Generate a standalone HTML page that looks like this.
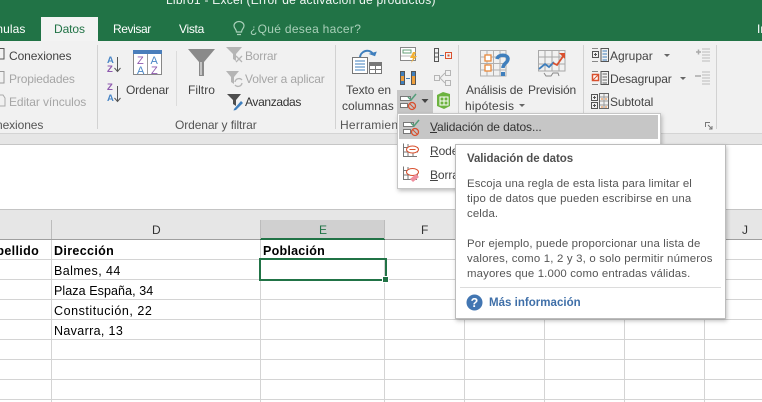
<!DOCTYPE html>
<html><head><meta charset="utf-8"><style>
html,body{margin:0;padding:0}
body{width:762px;height:402px;overflow:hidden;position:relative;background:#fff;font-family:"Liberation Sans",sans-serif;font-size:12px;color:#444}
.a,.t{position:absolute}
.t{white-space:nowrap;line-height:16px}
svg{position:absolute;overflow:visible}
.g{color:#a6a6a6}
.w{color:#fff}
.c{color:#000;font-size:12.5px;letter-spacing:.3px}
.h{color:#333;font-size:12px}
.tip{color:#555;font-size:11.4px;letter-spacing:.14px;left:467px}
</style></head><body>
<div class="a" style="left:0;top:0;width:762px;height:41px;background:#217346"></div>
<div class="t w" style="left:166px;top:-8px;font-size:12px;letter-spacing:.25px;opacity:.95">Libro1 - Excel (Error de activación de productos)</div>
<div class="a" style="left:41px;top:17px;width:57px;height:24px;background:#f3f3f3"></div>
<div class="t w" style="left:-7px;top:21px;letter-spacing:.1px">mulas</div>
<div class="t" style="left:54px;top:21px;color:#217346;letter-spacing:-.1px">Datos</div>
<div class="t w" style="left:113px;top:21px;letter-spacing:-.4px">Revisar</div>
<div class="t w" style="left:179px;top:21px;letter-spacing:-.3px">Vista</div>
<svg style="left:233px;top:21px" width="12" height="16" fill="none" stroke="#a9d0b9" stroke-width="1.2"><path d="M3.5 11C3.5 8 1 7.5 1 4.800a5 4.300 0 0 1 10 0C11 7.500 8.500 8 8.500 11zM4 13.500h4"/></svg>
<div class="t" style="left:250px;top:21px;color:#a9d0b9;letter-spacing:.3px">¿Qué desea hacer?</div>
<div class="t w" style="left:757px;top:21px">In</div>

<div class="a" style="left:0;top:41px;width:762px;height:93px;background:#f1f1f1;border-bottom:1px solid #d4d4d4;box-sizing:border-box"></div>
<div class="a" style="left:0;top:134px;width:762px;height:10px;background:#e6e6e6"></div>
<div class="a" style="left:0;top:144px;width:762px;height:1px;background:#c6c6c6"></div>
<div class="a" style="left:0;top:209px;width:762px;height:1px;background:#c4c4c4"></div>
<div class="a" style="left:0;top:210px;width:762px;height:30px;background:#e6e6e6"></div>
<div class="a" style="left:0;top:239px;width:762px;height:1px;background:#9f9f9f"></div>

<!-- group separators -->
<div class="a" style="left:97px;top:45px;width:1px;height:84px;background:#d2d2d2"></div>
<div class="a" style="left:176px;top:51px;width:1px;height:55px;background:#dcdcdc"></div>
<div class="a" style="left:335px;top:45px;width:1px;height:84px;background:#d2d2d2"></div>
<div class="a" style="left:458px;top:45px;width:1px;height:84px;background:#d2d2d2"></div>
<div class="a" style="left:583px;top:45px;width:1px;height:84px;background:#d2d2d2"></div>
<div class="a" style="left:716px;top:45px;width:1px;height:84px;background:#d2d2d2"></div>

<!-- Conexiones -->
<svg style="left:0;top:48px" width="5" height="60" fill="none" stroke="#666"><path d="M-3 .5H4V11H-3M-3 23.500H4V35H-3" stroke="#999"/><path d="M-3 .5H4V11H-3" stroke="#555"/><path d="M-3 47H3L5 50V58H-3" stroke="#aaa"/></svg>
<div class="t" style="left:9px;top:48px;color:#444;letter-spacing:-.1px">Conexiones</div>
<div class="t g" style="left:9px;top:71px;letter-spacing:-.15px">Propiedades</div>
<div class="t g" style="left:9px;top:94px;letter-spacing:-.1px">Editar vínculos</div>
<div class="t" style="left:-4px;top:117px;color:#555;letter-spacing:-.1px">nexiones</div>

<!-- Ordenar -->
<svg style="left:106px;top:54px" width="16" height="50" font-family="Liberation Sans" font-size="9.500" font-weight="bold"><text x="1" y="9" fill="#4a86c5">A</text><text x="1" y="18" fill="#8e59ae">Z</text><path d="M11.500 3V17M8.500 14l3 3.500 3-3.500" stroke="#555" fill="none"/><text x="1" y="36" fill="#8e59ae">Z</text><text x="1" y="47" fill="#4a86c5">A</text><path d="M11.500 32V47M8.500 44l3 3.500 3-3.500" stroke="#555" fill="none"/></svg>
<svg style="left:133px;top:50px" width="30" height="25" font-family="Liberation Sans" font-size="11"><rect x=".5" y=".5" width="28" height="24" fill="#fff" stroke="#888"/><rect width="29" height="4" fill="#4a7ebb"/><path d="M14.500 4V24" stroke="#999"/><text x="4" y="14" fill="#8e59ae">Z</text><text x="4" y="24" fill="#4a86c5">A</text><text x="17.500" y="14" fill="#4a86c5">A</text><text x="18" y="24" fill="#8e59ae">Z</text></svg>
<div class="t" style="left:126px;top:82px;letter-spacing:-.15px">Ordenar</div>
<!-- Filtro -->
<svg style="left:187px;top:48px" width="30" height="30"><path d="M1 1H28L17 14V28H12V14Z" fill="#8a8a8a"/><path d="M14 14V27" stroke="#d8d8d8" stroke-width="1.500"/></svg>
<div class="t" style="left:188px;top:82px;letter-spacing:.05px">Filtro</div>
<svg style="left:226px;top:46px" width="20" height="20"><path d="M0 1H16L10 8V15L7 13V8Z" fill="#b5b5b5"/><path d="M10 10l6 6M16 10l-6 6" stroke="#b5b5b5" stroke-width="1.300"/></svg>
<div class="t g" style="left:245px;top:48px;letter-spacing:-.2px">Borrar</div>
<svg style="left:226px;top:70px" width="20" height="20" fill="none"><path d="M0 1H13L8 7V14L5 12V7Z" fill="#b5b5b5"/><path d="M9 12a4 4 0 0 1 7-2M16 13a4 4 0 0 1-7 2" stroke="#b5b5b5" stroke-width="1.300"/></svg>
<div class="t g" style="left:245px;top:71px;letter-spacing:-.15px">Volver a aplicar</div>
<svg style="left:226px;top:93px" width="20" height="18"><path d="M1 1H15L10 7V13L7 11V7Z" fill="#4d4d4d"/><path d="M8 16L15 8l2 2-7 7-2.500.5z" fill="#3f7fbd"/></svg>
<div class="t" style="left:245px;top:94px;color:#333;letter-spacing:-.35px">Avanzadas</div>
<div class="t" style="left:175px;top:117px;color:#555;letter-spacing:-.1px">Ordenar y filtrar</div>

<!-- Herramientas -->
<svg style="left:352px;top:48px" width="32" height="28" fill="none"><path d="M8 10C8 3 17 0 21 6" stroke="#3f7fbd" stroke-width="2"/><path d="M17 7h7v-5z" fill="#3f7fbd" transform="rotate(20 20 5)"/><path d="M.5 9.500H15.500V25.500H.5z" fill="#fff" stroke="#777"/><path d="M3 13h10M3 16h10M3 19h10M3 22h10" stroke="#3f7fbd"/><rect x="17.500" y="14.500" width="12" height="11" fill="#fff" stroke="#777"/><path d="M17 15h13v3H17z" fill="#777"/><path d="M23.500 18v7M18 21.500h11" stroke="#777"/></svg>
<div class="t" style="left:346px;top:82px;letter-spacing:-.05px">Texto en</div>
<div class="t" style="left:342px;top:98px;letter-spacing:.05px">columnas</div>
<div class="t" style="left:340px;top:117px;color:#555;letter-spacing:.25px">Herramient</div>
<svg style="left:400px;top:47px" width="18" height="17" fill="none"><rect x=".5" y=".5" width="15" height="13" fill="#fff" stroke="#888"/><rect x="3" y="3" width="8" height="3" stroke="#66a078"/><path d="M1 9h14" stroke="#bbb"/><path d="M13 5l-3 6h3l-2 5 6-7h-3l2-4z" fill="#f2b134"/></svg>
<svg style="left:400px;top:71px" width="17" height="15"><rect y="0" width="5" height="14" fill="#3f7fbd"/><rect y="5" width="5" height="5" fill="#ee9f3c"/><rect x=".5" y=".5" width="4" height="13" fill="none" stroke="#555"/><path d="M6 7.500h4" stroke="#3f7fbd"/><rect x="11.500" y=".5" width="4" height="13" fill="#ee9f3c" stroke="#555"/><rect x="12" y="1" width="3" height="4" fill="#3f7fbd"/></svg>
<svg style="left:434px;top:48px" width="18" height="15" fill="none"><rect x=".5" y=".5" width="4" height="13" stroke="#555"/><path d="M1 5h3M1 9h3" stroke="#555"/><path d="M6 7.500h4" stroke="#3f7fbd"/><rect x="11.500" y="4.500" width="6" height="6" stroke="#d9502e"/><rect x="13.500" y="6.500" width="2" height="2" fill="#d9502e"/></svg>
<svg style="left:434px;top:70px" width="18" height="17" fill="none" stroke="#b5b5b5"><rect x=".5" y="5.500" width="5" height="5"/><rect x="11.500" y=".5" width="5" height="5"/><rect x="11.500" y="10.500" width="5" height="5"/><path d="M6 8l5-5M6 8l5 5"/></svg>
<div class="a" style="left:397px;top:90px;width:36px;height:23px;background:#c6c6c6"></div>
<svg style="left:400px;top:93px" width="18" height="18" fill="none"><rect x=".5" y="3.500" width="10" height="4" fill="#fff" stroke="#777"/><rect x=".5" y="10.500" width="7" height="4" fill="#fff" stroke="#777"/><path d="M8 4l3 3 5-6" stroke="#549e7a" stroke-width="1.500"/><circle cx="12" cy="13" r="3.500" stroke="#d9502e" stroke-width="1.300"/><path d="M9.500 10.500l5 5" stroke="#d9502e"/></svg>
<svg style="left:421px;top:99px" width="8" height="5"><path d="M.5 0h7L4 4z" fill="#444"/></svg>
<svg style="left:435px;top:92px" width="16" height="17"><path d="M2 3l6-3 7 2v12l-6 3-7-3z" fill="#6cb33f"/><path d="M5 5h8v8H5zM9 5v8M5 9h8" stroke="#fff" fill="none"/></svg>

<!-- Previsión -->
<svg style="left:480px;top:50px" width="34" height="29" fill="none"><path d="M.5.5H26V26H.500zM7 1V26M13.500 1V26M20 1V26M1 7H26M1 13.500H26M1 20H26" stroke="#b0b0b0"/><rect x="5" y="5" width="6" height="6" fill="#fff" stroke="#e8883a" stroke-width="1.300"/><rect x="5" y="15" width="6" height="6" fill="#fff" stroke="#e8883a" stroke-width="1.300"/><path d="M17 9c1-5 11-5 11 0 0 4-5 4-5 9" stroke="#3f7fbd" stroke-width="3.500"/><rect x="21" y="22" width="4" height="4" fill="#3f7fbd"/></svg>
<div class="t" style="left:466px;top:82px;letter-spacing:-.1px">Análisis de</div>
<div class="t" style="left:465px;top:98px;letter-spacing:.2px">hipótesis</div>
<svg style="left:519px;top:104px" width="7" height="4"><path d="M0 0h6L3 3z" fill="#666"/></svg>
<svg style="left:538px;top:50px" width="30" height="27" fill="none"><path d="M.5.5H27V21H.5zM7 1V21M14 1V21M21 1V21M1 7H27M1 14H27" stroke="#a8a8a8"/><path d="M6 23l2 3h5l2-3h5l1 3" stroke="#888"/><path d="M1 19l6-5 4 3 5-5" stroke="#3f7fbd" stroke-width="1.800"/><path d="M15 13l4 2 7-10" stroke="#d9502e" stroke-width="1.800"/><path d="M21 3h6v6z" fill="#d9502e"/></svg>
<div class="t" style="left:528px;top:82px;letter-spacing:-.15px">Previsión</div>

<!-- Esquema -->
<svg style="left:591px;top:48px" width="18" height="15" fill="none"><rect x="1.500" y="3.500" width="6" height="6" stroke="#555"/><path d="M3 6.500h3M4.500 5v3" stroke="#555"/><path d="M1 .5H7M1 13.500H7" stroke="#888"/><rect x="10" y=".5" width="7.500" height="13" stroke="#555"/><path d="M11.500 3h4.500M11.500 6h4.500M11.500 9h4.500M11.500 12h4.500" stroke="#3f7fbd"/></svg>
<div class="t" style="left:610px;top:48px;letter-spacing:0">Agrupar</div>
<svg style="left:664px;top:54px" width="7" height="4"><path d="M0 0h6L3 3z" fill="#666"/></svg>
<svg style="left:695px;top:48px" width="16" height="15" fill="none" stroke="#bbb"><path d="M7 1h8M7 4h8M7 7h8M7 10h8M7 13h8"/><path d="M1 4h5M3.500 1.500v5" stroke="#aaa" stroke-width="1.500"/></svg>
<svg style="left:591px;top:71px" width="18" height="15" fill="none"><rect x="1.500" y="3.500" width="6" height="6" fill="#fff" stroke="#d9502e" stroke-width="1.500"/><path d="M2 9l5-5" stroke="#d9502e"/><path d="M1 .5H7M1 13.500H7" stroke="#888"/><rect x="10" y=".5" width="7.500" height="13" stroke="#555"/><path d="M11.500 3h4.500M11.500 6h4.500M11.500 9h4.500M11.500 12h4.500" stroke="#666"/></svg>
<div class="t" style="left:610px;top:71px;letter-spacing:-.1px">Desagrupar</div>
<svg style="left:680px;top:77px" width="7" height="4"><path d="M0 0h6L3 3z" fill="#666"/></svg>
<svg style="left:695px;top:71px" width="16" height="15" fill="none" stroke="#bbb"><path d="M7 1h8M7 4h8M7 7h8M7 10h8M7 13h8"/><path d="M0 5h6" stroke="#aaa" stroke-width="1.500"/></svg>
<svg style="left:591px;top:93px" width="18" height="16" fill="none"><rect x=".5" y="1.500" width="6" height="6" stroke="#555"/><rect x=".5" y="9.500" width="6" height="6" stroke="#555"/><path d="M2 4.500h3M3.500 3v3M2 12.500h3M3.500 11v3" stroke="#555"/><rect x="8.500" y=".5" width="9" height="15" stroke="#666"/><path d="M9 4h8M9 8h8M9 12h8M13 1v14" stroke="#999"/><path d="M10 6h2M14 6h2M10 14h2M14 14h2" stroke="#e8883a"/></svg>
<div class="t" style="left:610px;top:94px;letter-spacing:-.1px">Subtotal</div>
<svg style="left:705px;top:122px" width="8" height="8" fill="none" stroke="#777"><path d="M.5 5V.5H5M3 3l4 4M7 4v3H4"/></svg>

<!-- Column headers -->
<div class="a" style="left:260px;top:220px;width:125px;height:19px;background:#d0d0d0"></div>
<div class="a" style="left:260px;top:238px;width:125px;height:2px;background:#217346"></div>
<div class="a" style="left:51px;top:220px;width:1px;height:19px;background:#bcbcbc"></div>
<div class="a" style="left:260px;top:220px;width:1px;height:19px;background:#bcbcbc"></div>
<div class="a" style="left:384px;top:220px;width:1px;height:19px;background:#bcbcbc"></div>
<div class="t h" style="left:152px;top:222px">D</div>
<div class="t" style="left:319px;top:222px;color:#217346">E</div>
<div class="t h" style="left:421px;top:222px">F</div>
<div class="t h" style="left:742px;top:222px">J</div>

<!-- Grid -->
<svg style="left:0;top:240px" width="762" height="162" fill="none" stroke="#d4d4d4"><path d="M0 19.500H762M0 39.500H762M0 59.500H762M0 79.500H762M0 99.500H762M0 119.500H762M0 139.500H762M0 159.500H762M51.500 0V162M260.500 0V162M384.500 0V162M464.500 0V162M544.500 0V162M624.500 0V162M704.500 0V162"/></svg>

<div class="t c" style="left:-13px;top:243px;font-weight:bold;letter-spacing:.35px">Apellido</div>
<div class="t c" style="left:54px;top:243px;font-weight:bold;letter-spacing:.35px">Dirección</div>
<div class="t c" style="left:263px;top:243px;font-weight:bold;letter-spacing:.25px">Población</div>
<div class="t c" style="left:54px;top:263px;letter-spacing:.42px">Balmes, 44</div>
<div class="t c" style="left:54px;top:283px;letter-spacing:.08px">Plaza España, 34</div>
<div class="t c" style="left:54px;top:303px;letter-spacing:.55px">Constitución, 22</div>
<div class="t c" style="left:54px;top:323px;letter-spacing:.35px">Navarra, 13</div>
<div class="a" style="left:259px;top:258px;width:128px;height:23px;border:2px solid #217346;box-sizing:border-box"></div>
<div class="a" style="left:382px;top:276px;width:5px;height:5px;background:#217346;border:1px solid #fff"></div>

<!-- Dropdown -->
<div class="a" style="left:397px;top:113px;width:264px;height:76px;background:#fff;border:1px solid #c6c6c6;box-sizing:border-box;box-shadow:1px 2px 4px rgba(0,0,0,.25)"></div>
<div class="a" style="left:399px;top:115px;width:259px;height:24px;background:#c6c6c6"></div>
<svg style="left:403px;top:119px" width="18" height="18" fill="none"><rect x=".5" y="3.500" width="10" height="4" fill="#fff" stroke="#777"/><rect x=".5" y="10.500" width="7" height="4" fill="#fff" stroke="#777"/><path d="M8 4l3 3 5-6" stroke="#549e7a" stroke-width="1.500"/><circle cx="12" cy="13" r="3.500" stroke="#d9502e" stroke-width="1.300"/><path d="M9.500 10.500l5 5" stroke="#d9502e"/></svg>
<div class="t" style="left:430px;top:119px;color:#333;letter-spacing:-.1px"><u>V</u>alidación de datos...</div>
<svg style="left:403px;top:143px" width="17" height="15" fill="none"><path d="M.5.5V13.500H14M.5 4.500H15M.5 9H15M5 1V14M10 10V14" stroke="#777"/><ellipse cx="9.500" cy="6.500" rx="6" ry="3.500" fill="#fff" stroke="#d9502e"/><path d="M6.500 6.500h6" stroke="#d9502e"/></svg>
<div class="t" style="left:430px;top:143px;color:#444;letter-spacing:-.1px"><u>R</u>ode</div>
<svg style="left:403px;top:166px" width="18" height="18" fill="none"><path d="M.5.5V13.500H14M.5 4.500H15M.5 9H15M5 1V14" stroke="#777"/><ellipse cx="9.500" cy="6" rx="6" ry="3.500" fill="#fff" stroke="#d9502e"/><path d="M7 13l6-5 3 3-6 5z" fill="#ef8e9d"/></svg>
<div class="t" style="left:430px;top:167px;color:#444;letter-spacing:-.1px"><u>B</u>orra</div>

<!-- Tooltip -->
<div class="a" style="left:455px;top:144px;width:271px;height:175px;background:#fff;border:1px solid #bcbcbc;box-sizing:border-box;box-shadow:1px 2px 4px rgba(0,0,0,.25)"></div>
<div class="t" style="left:467px;top:151px;font-weight:bold;color:#505050;font-size:11.500px;letter-spacing:-.07px">Validación de datos</div>
<div class="t tip" style="top:176px;letter-spacing:.1px">Escoja una regla de esta lista para limitar el</div>
<div class="t tip" style="top:191px">tipo de datos que pueden escribirse en una</div>
<div class="t tip" style="top:206px">celda.</div>
<div class="t tip" style="top:236px">Por ejemplo, puede proporcionar una lista de</div>
<div class="t tip" style="top:251px;letter-spacing:.19px">valores, como 1, 2 y 3, o solo permitir números</div>
<div class="t tip" style="top:266px">mayores que 1.000 como entradas válidas.</div>
<div class="a" style="left:460px;top:287px;width:261px;height:1px;background:#dcdcdc"></div>
<svg style="left:466px;top:294px" width="17" height="17"><circle cx="8.500" cy="8.500" r="8" fill="#4276b2"/><text x="8.500" y="13" text-anchor="middle" font-family="Liberation Sans" font-weight="bold" font-size="12.500" fill="#fff">?</text></svg>
<div class="t" style="left:489px;top:295px;font-weight:bold;color:#3f6fa8;font-size:11.500px;letter-spacing:.02px">Más información</div>
</body></html>
